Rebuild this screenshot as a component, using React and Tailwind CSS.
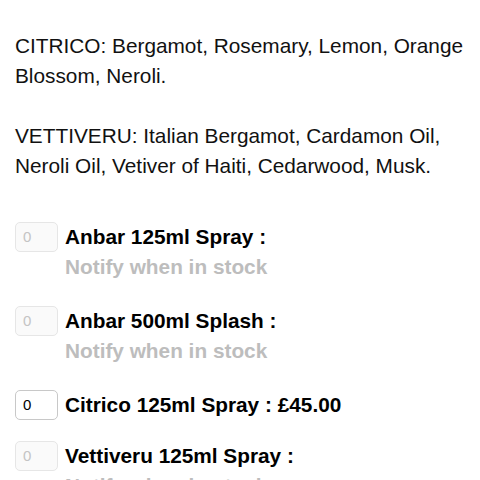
import React from 'react';

const products = [
  { name: 'Anbar 125ml Spray', inStock: false },
  { name: 'Anbar 500ml Splash', inStock: false },
  { name: 'Citrico 125ml Spray', inStock: true, price: '£45.00' },
  { name: 'Vettiveru 125ml Spray', inStock: false },
];

const QtyBox = ({ active }) => (
  <div
    className={`w-[43px] h-[30px] shrink-0 rounded-[5px] border flex items-center pl-[7px] text-[15px] ${
      active ? 'border-[#c8c8c8] bg-white text-black' : 'border-[#e6e6e6] bg-[#fafafa] text-[#c4c4c4]'
    }`}
  >
    0
  </div>
);

const ProductRow = ({ product }) => (
  <div className={`flex gap-[7px] ${product.inStock ? 'mb-[21px]' : 'mb-6'}`}>
    <QtyBox active={product.inStock} />
    <div className="flex flex-col">
      <p className="text-[20.8px] leading-[30px] font-bold text-black whitespace-nowrap">
        {product.name} :{product.price ? ` ${product.price}` : ''}
      </p>
      {!product.inStock && (
        <p className="text-[20.8px] leading-[30px] font-bold text-[#bdbdbd] whitespace-nowrap">Notify when in stock</p>
      )}
    </div>
  </div>
);

export default function App() {
  return (
    <div
      className="w-[480px] h-[480px] overflow-hidden bg-white pl-[15px] pr-[8px] pt-[31px]"
      style={{ fontFamily: '"Liberation Sans", Arial, sans-serif' }}
    >
      <p className="text-[20.8px] leading-[30px] text-[#111]">
        CITRICO: Bergamot, Rosemary, Lemon, Orange Blossom, Neroli.
      </p>
      <p className="text-[20.8px] leading-[30px] text-[#111] mt-[30px]">
        VETTIVERU: Italian Bergamot, Cardamon Oil, Neroli Oil, Vetiver of Haiti, Cedarwood, Musk.
      </p>
      <div className="mt-[41px]">
        {products.map((p) => (
          <ProductRow key={p.name} product={p} />
        ))}
      </div>
    </div>
  );
}
